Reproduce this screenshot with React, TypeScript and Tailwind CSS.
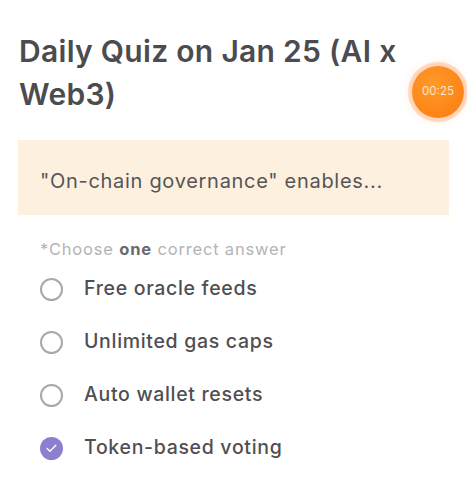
import { Check } from "lucide-react";

const options = [
  { label: "Free oracle feeds", checked: false },
  { label: "Unlimited gas caps", checked: false },
  { label: "Auto wallet resets", checked: false },
  { label: "Token-based voting", checked: true },
];

export default function App() {
  return (
    <div
      className="h-[504px] w-[467px] overflow-hidden bg-white"
      style={{ fontFamily: "Inter, 'Noto Sans', sans-serif" }}
    >
      <header className="flex items-start pl-[19px] pt-[30px]">
        <h1 className="w-[390px] text-[30px] font-semibold leading-[43px] tracking-[0.01em] text-[#4b4b50]">
          Daily Quiz on Jan 25 (AI x Web3)
        </h1>
        <div className="ml-[3px] mt-[36px] flex h-[52px] w-[52px] shrink-0 items-center justify-center rounded-full bg-[radial-gradient(circle_at_40%_35%,#ff9a2a,#fb7a10)] shadow-[0_0_0_4px_rgba(255,170,110,0.35),0_0_10px_rgba(255,140,60,0.45)]">
          <span className="text-[11.5px] text-[#ffe3c8]">00:25</span>
        </div>
      </header>

      <div className="mx-[18px] mt-[22px] h-[75px] bg-[#fdf0de] px-[22px] pt-[30px]">
        <p className="text-[20px] leading-[23px] tracking-[0.035em] text-[#555558]">
          "On-chain governance" enables...
        </p>
      </div>

      <p className="ml-[40px] mt-[23px] text-[16.5px] leading-[22px] tracking-[0.05em] text-[#b3b3b6]">
        *Choose <span className="font-bold text-[#6a6a6e]">one</span> correct answer
      </p>

      <ul className="ml-[40px] mt-[17px] flex flex-col gap-[29px]">
        {options.map((option) => (
          <li key={option.label} className="flex h-[24px] items-center">
            {option.checked ? (
              <span className="flex h-[23px] w-[23px] items-center justify-center rounded-full bg-[#8b80cf]">
                <Check className="h-[13px] w-[13px] text-white" strokeWidth={2.5} />
              </span>
            ) : (
              <span className="h-[23px] w-[23px] rounded-full border-2 border-[#a8a8ab]" />
            )}
            <span className="ml-[21px] text-[19.5px] font-medium tracking-[0.035em] text-[#4f4f53]">
              {option.label}
            </span>
          </li>
        ))}
      </ul>
    </div>
  );
}
